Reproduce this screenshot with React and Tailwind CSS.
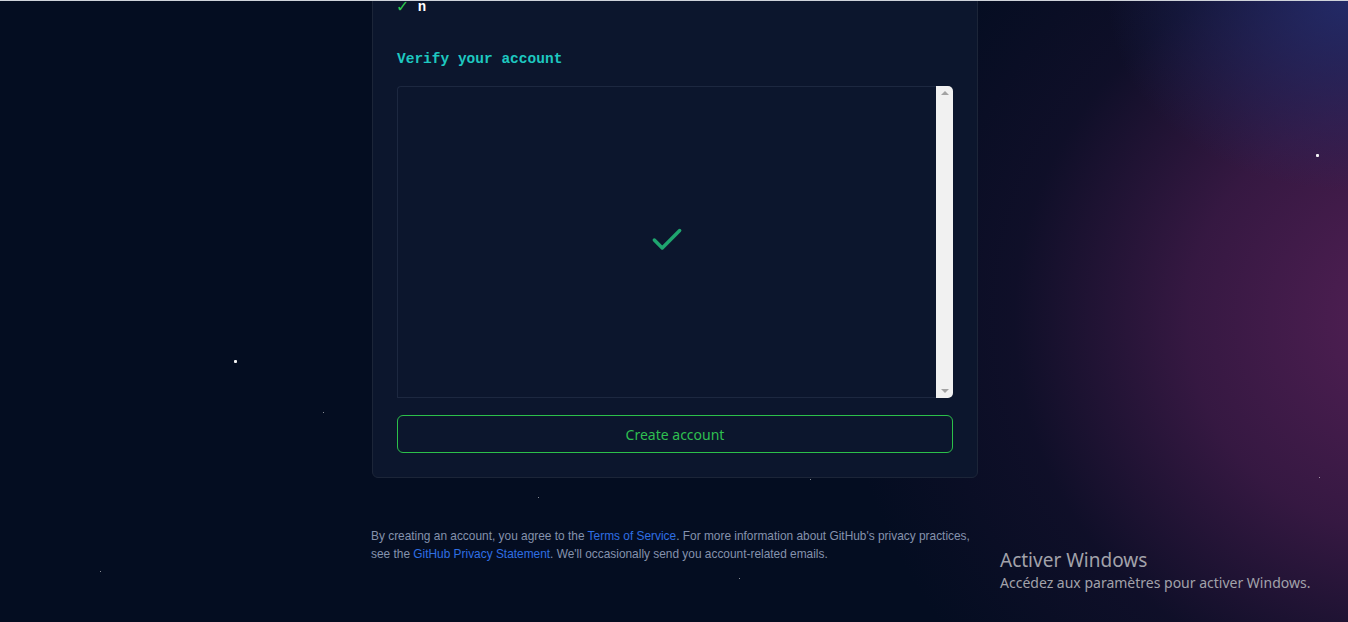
import { Check } from "lucide-react";

const STARS = [
    { x: 234, y: 360, s: 3 },
    { x: 1316, y: 154, s: 3 },
    { x: 323, y: 412, s: 1 },
    { x: 538, y: 497, s: 1 },
    { x: 810, y: 479, s: 1 },
    { x: 100, y: 571, s: 1 },
    { x: 739, y: 578, s: 1 },
    { x: 1319, y: 477, s: 1 },
];

function Scrollbar() {
    return (
        <div className="w-[17px] bg-[#f1f1f1] rounded-r-[5px] flex flex-col justify-between items-center py-[5px]">
            <div className="w-0 h-0 border-l-[4px] border-r-[4px] border-b-[4px] border-l-transparent border-r-transparent border-b-[#a3a3a3]" />
            <div className="w-0 h-0 border-l-[4px] border-r-[4px] border-t-[4px] border-l-transparent border-r-transparent border-t-[#a3a3a3]" />
        </div>
    );
}

export default function App() {
    return (
        <div className="relative w-full h-[622px] overflow-hidden bg-[#040d21] font-['Noto_Sans',sans-serif]">
            {/* background glow */}
            <div className="absolute inset-0 bg-[radial-gradient(ellipse_580px_540px_at_1420px_320px,rgba(84,32,86,1),rgba(66,27,74,0.8)_40%,rgba(32,18,52,0.4)_70%,rgba(4,13,33,0)_100%)]" />
            <div className="absolute inset-0 bg-[radial-gradient(ellipse_240px_190px_at_1348px_0px,rgba(36,46,112,0.85),rgba(4,13,33,0)_100%)]" />

            {STARS.map((st, i) => (
                <div
                    key={i}
                    className="absolute bg-white rounded-[1px]"
                    style={{ left: st.x, top: st.y, width: st.s, height: st.s, opacity: st.s > 1 ? 0.95 : 0.7 }}
                />
            ))}

            {/* top window edge */}
            <div className="absolute top-0 left-0 right-0 h-px bg-[#cfd3da] z-10" />

            <div className="relative mx-auto w-[606px] -mt-[4px] translate-x-px">
                {/* Card */}
                <div className="bg-[#0c162d] border border-[#1c2538] rounded-b-[6px] px-6 pb-6">
                    <div className="flex items-center gap-[10px] h-[20px] font-['Liberation_Mono',monospace] text-[14px] font-bold">
                        <span className="text-[#2fcb4f] text-[18px] leading-none font-bold">✓</span>
                        <span className="text-white">n</span>
                    </div>

                    <h2 className="mt-[32px] font-['Liberation_Mono',monospace] font-bold text-[14.5px] leading-[20px] text-[#1ec8c0]">
                        Verify your account
                    </h2>

                    <div className="mt-[17px] h-[312px] flex">
                        <div className="flex-1 border-l border-t border-b border-[#1d2840] rounded-tl-[4px] flex items-center justify-center">
                            <Check className="w-[38px] h-[38px] text-[#1fa56f] -mt-[4px]" strokeWidth={2.2} />
                        </div>
                        <Scrollbar />
                    </div>

                    <button className="mt-[17px] w-full h-[38px] rounded-[6px] border border-[#2cc04a] text-[#2fbf50] text-[14px] bg-transparent">
                        Create account
                    </button>
                </div>

                {/* Footer */}
                <p className="mt-[49px] -ml-px whitespace-nowrap font-['Liberation_Sans',sans-serif] text-[11.9px] leading-[18px] text-[#8592ad]">
                    By creating an account, you agree to the{" "}
                    <a className="text-[#2f6fe4]">Terms of Service</a>. For more information about GitHub's privacy practices,
                    <br />
                    see the <a className="text-[#2f6fe4]">GitHub Privacy Statement</a>. We'll occasionally send you account-related emails.
                </p>
            </div>

            {/* Windows watermark */}
            <div className="absolute left-[1000px] top-[547px] text-[#a2a2aa]">
                <div className="text-[19px] leading-[26px]">Activer Windows</div>
                <div className="text-[14px] leading-[20px]">Accédez aux paramètres pour activer Windows.</div>
            </div>
        </div>
    );
}
